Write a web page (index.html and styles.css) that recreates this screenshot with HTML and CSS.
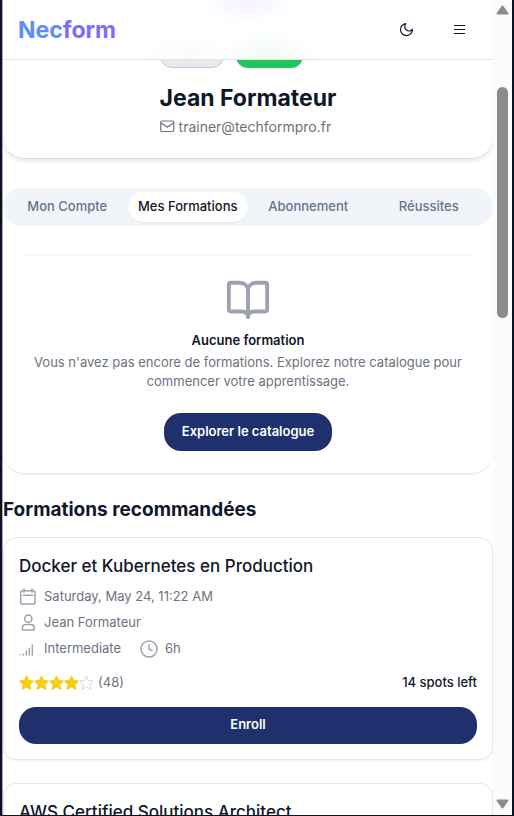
FILE: index.html
```html
<!DOCTYPE html>
<html lang="fr">
<head>
<meta charset="utf-8">
<meta name="viewport" content="width=device-width, initial-scale=1">
<title>Necform</title>
<link rel="stylesheet" href="styles.css">
</head>
<body>
<div class="frame">
  <div class="page">
    <header class="topbar">
      <a class="logo" href="#"><span class="logo-start">Nec</span><span class="logo-end">form</span></a>
      <nav class="actions">
        <button class="icon-button" type="button" aria-label="Thème">
          <svg width="15" height="15" viewBox="0 0 24 24" fill="none" stroke="currentColor" stroke-width="2" stroke-linecap="round" stroke-linejoin="round"><path d="M11 2.500a6.500 6.500 0 0 0 10.500 9.500A9.600 9.600 0 1 1 11 2.500z"/></svg>
        </button>
        <button class="icon-button" type="button" aria-label="Menu">
          <svg width="15" height="15" viewBox="0 0 15 15" fill="none" stroke="currentColor" stroke-width="1.200"><path d="M2 3.500h11M2 7.500h11M2 11.500h11"/></svg>
        </button>
      </nav>
    </header>
    <main class="content">
      <section class="profile">
        <div class="identity">
          <div class="badges"><span class="badge badge-role"></span><span class="badge badge-active"></span></div>
          <h1>Jean Formateur</h1>
          <p class="email">
            <svg width="15" height="15" viewBox="0 0 15 15" fill="none" stroke="currentColor" stroke-width="1.200" stroke-linejoin="round"><rect x=".8" y="2" width="13" height="10.500" rx="1.200"/><path d="M1 3.700l6.300 4.500L13.800 3.700"/></svg>
            trainer@techformpro.fr
          </p>
        </div>
      </section>
      <div class="tabs" role="tablist">
        <button class="tab" type="button" role="tab">Mon Compte</button>
        <button class="tab tab-active" type="button" role="tab" aria-selected="true">Mes Formations</button>
        <button class="tab" type="button" role="tab">Abonnement</button>
        <button class="tab" type="button" role="tab">Réussites</button>
      </div>
      <section class="empty">
        <svg width="46" height="46" viewBox="0 0 24 24" fill="none" stroke="currentColor" stroke-width="2" stroke-linecap="round" stroke-linejoin="round"><path d="M12 7v14M3 18a1 1 0 0 1-1-1V4a1 1 0 0 1 1-1h5a4 4 0 0 1 4 4 4 4 0 0 1 4-4h5a1 1 0 0 1 1 1v13a1 1 0 0 1-1 1h-6a3 3 0 0 0-3 3 3 3 0 0 0-3-3z"/></svg>
        <h3>Aucune formation</h3>
        <p>Vous n'avez pas encore de formations. Explorez notre catalogue pour commencer votre apprentissage.</p>
        <button class="primary" type="button">Explorer le catalogue</button>
      </section>
      <h2>Formations recommandées</h2>
      <article class="course">
        <h3>Docker et Kubernetes en Production</h3>
        <ul class="details">
          <li>
            <svg width="18" height="18" viewBox="0 0 18 18" fill="none" stroke="currentColor" stroke-width="1.500" stroke-linecap="round"><rect x="1.700" y="2.700" width="14.300" height="13.300" rx="1.800"/><path d="M5 1v3.200M13 1v3.200M4.500 7.300h9"/></svg>
            <span>Saturday, May 24, 11:22 AM</span>
          </li>
          <li>
            <svg width="18" height="18" viewBox="0 0 18 18" fill="none" stroke="currentColor" stroke-width="1.500" stroke-linejoin="round"><circle cx="9.300" cy="4.700" r="3.600"/><path d="M3.500 16v-2c0-2.200 1.600-3.400 3.600-3.400h4.600c2 0 3.600 1.200 3.600 3.400v2z"/></svg>
            <span>Jean Formateur</span>
          </li>
          <li>
            <svg width="18" height="18" viewBox="0 0 18 18" fill="none" stroke="currentColor" stroke-width="1.400" stroke-linecap="round"><path d="M1.400 14.900v.1M4.300 14.100v.9M7.300 11v4M10.300 8.500v6.500M13.300 5v10"/></svg>
            <span>Intermediate</span>
            <svg class="clock" width="18" height="18" viewBox="0 0 18 18" fill="none" stroke="currentColor" stroke-width="1.500" stroke-linecap="round"><circle cx="9" cy="9" r="8"/><path d="M9 4.700V9l3 1.600"/></svg>
            <span>6h</span>
          </li>
        </ul>
        <div class="summary">
          <div class="rating">
            <svg width="75" height="16" viewBox="0 0 75 16"><defs><path id="star" d="M7.500 1.200l2 4.300 4.700.6-3.450 3.250.9 4.750-4.150-2.300-4.150 2.300.9-4.750L.8 6.100l4.700-.6z" stroke-linejoin="round"/></defs><g fill="#facc15" stroke="#facc15" stroke-width="1.300"><use href="#star"/><use href="#star" x="15"/><use href="#star" x="30"/><use href="#star" x="45"/></g><use href="#star" x="60" fill="none" stroke="#d1d5db"/></svg>
            <span>(48)</span>
          </div>
          <strong>14 spots left</strong>
        </div>
        <button class="primary" type="button">Enroll</button>
      </article>
      <article class="course">
        <h3>AWS Certified Solutions Architect</h3>
      </article>
    </main>
  </div>
  <div class="scrollbar" aria-hidden="true">
    <svg width="13" height="10" viewBox="0 0 13 10"><path d="M6.500 1.500l5 7h-10z" fill="#8b8b8b" stroke="#8b8b8b" stroke-width="2" stroke-linejoin="round"/></svg>
    <div class="track"><div class="thumb"></div></div>
    <svg width="13" height="10" viewBox="0 0 13 10"><path d="M6.500 8.500l5-7h-10z" fill="#8b8b8b" stroke="#8b8b8b" stroke-width="2" stroke-linejoin="round"/></svg>
  </div>
</div>
</body>
</html>
```
FILE: styles.css
```css
* { box-sizing: border-box; }
body {
  margin: 0;
  background: #0f172a;
  color: #0f172a;
  font-family: Inter, "Liberation Sans", sans-serif;
  font-size: 13px;
  line-height: 19px;
}
h1, h2, h3, p, ul { margin: 0; padding: 0; }
button { font: inherit; color: inherit; border: 0; padding: 0; background: none; }
svg { flex: none; display: block; }

.frame {
  display: flex;
  height: 100vh;
  border: solid #0b1124;
  border-width: 0 2px 1px;
  background: #fff;
}
.page {
  position: relative;
  flex: 1;
  min-width: 0;
  overflow: hidden;
  border-left: 1px solid #a9acb8;
}
.topbar {
  position: absolute;
  inset: 0 0 auto;
  z-index: 1;
  display: flex;
  align-items: center;
  justify-content: space-between;
  height: 60px;
  padding: 0 19px 0 15px;
  border-bottom: 1px solid #e5e5e5;
  background:
    radial-gradient(ellipse 48px 24px at 50% 0, #f5f0ff, transparent),
    radial-gradient(ellipse 52px 28px at 54% 100%, #effaf2, transparent),
    radial-gradient(ellipse 48px 26px at 38% 100%, #fafafb, transparent),
    #fff;
}
.logo {
  font-size: 23px;
  font-weight: 700;
  line-height: 30px;
  text-decoration: none;
}
.logo-start { color: #608cff; }
.logo-end { color: #7b6cff; }
.actions { display: flex; gap: 23px; }
.icon-button { display: grid; place-items: center; width: 30px; height: 30px; }

.profile {
  display: flex;
  justify-content: center;
  padding: 44px 16px 22px;
  border-bottom: 1px solid #dcdcdc;
  border-radius: 0 0 22px 22px;
  box-shadow: 0 2px 4px rgba(0, 0, 0, .1);
}
.badges { display: flex; gap: 12px; }
.badge { width: 64px; height: 24px; border-radius: 12px; }
.badge-role { border: 1px solid #c5c5dc; background: #e8e8ee; }
.badge-active { width: 67px; background: #22c55e; }
h1 { margin-top: 14px; font-size: 23px; line-height: 32px; }
.email { display: flex; align-items: center; gap: 4px; margin-top: 3px; color: #6b7280; font-size: 14px; }

.tabs {
  display: grid;
  grid-template-columns: repeat(4, 1fr);
  margin-top: 29px;
  padding: 4px;
  border-radius: 19px;
  background: #f1f5f9;
  color: #64748b;
}
.tab { height: 30px; padding-bottom: 2px; border-radius: 15px; font-weight: 500; white-space: nowrap; }
.tab-active { background: #fff; color: #0f172a; box-shadow: 0 1px 2px rgba(0, 0, 0, .06); }

.empty {
  display: flex;
  flex-direction: column;
  align-items: center;
  margin-top: 29px;
  padding: 21px 22px 22px;
  border-top: 1px solid #f8f8f8;
  border-bottom: 1px solid #e2e2e2;
  border-radius: 22px;
  box-shadow: 0 1px 2px rgba(0, 0, 0, .05);
  color: #9ca3af;
  text-align: center;
}
.empty h3 { margin-top: 8px; color: #0f172a; font-size: 13px; font-weight: 600; }
.empty p { margin-top: 3px; color: #6b7280; }
.primary {
  height: 38px;
  padding: 0 18px 2px;
  border-radius: 17px;
  background: #1e306e;
  color: #fff;
  font-weight: 600;
}
.empty .primary { margin-top: 22px; }
h2 { margin-top: 23px; font-size: 19px; line-height: 26px; }

.course {
  display: flex;
  flex-direction: column;
  margin-top: 14px;
  padding: 15px;
  border: 1px solid #e5e7eb;
  border-radius: 13px;
  box-shadow: 0 1px 2px rgba(0, 0, 0, .05);
}
.course + .course { margin-top: 23px; }
.course h3 { font-size: 17px; font-weight: 500; line-height: 26px; }
.details { display: grid; gap: 7px; margin-top: 8px; color: #6b7280; list-style: none; }
.details li { display: flex; align-items: center; gap: 7px; }
.details svg { color: #9ca3af; }
.details .clock { margin-left: 12px; }
.summary { display: flex; align-items: center; justify-content: space-between; margin-top: 15px; }
.summary strong { font-weight: 500; }
.rating { display: flex; align-items: center; gap: 4px; color: #6b7280; }
.course .primary { height: 37px; margin-top: 15px; }

.scrollbar {
  display: flex;
  flex-direction: column;
  align-items: center;
  width: 19px;
  padding: 5px 0 6px;
  background: #fbfbfb;
}
.track { flex: 1; width: 11px; padding-top: 72px; }
.thumb { height: 31%; min-height: 231px; border-radius: 6px; background: #8b8b8b; }
```
